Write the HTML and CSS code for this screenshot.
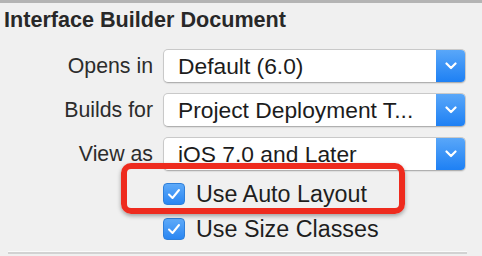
FILE: index.html
```html
<!DOCTYPE html>
<html>
<head>
<meta charset="utf-8">
<link rel="stylesheet" href="styles.css">
</head>
<body>
<div class="panel">
  <h1 class="title">Interface Builder Document</h1>
  <div class="form">
    <div class="label">Opens in</div>
    <div class="popup"><span class="value">Default (6.0)</span><span class="arrow"><svg width="12" height="8" viewBox="0 0 12 8"><path d="M1.5 1.5 L6 6 L10.5 1.5" fill="none" stroke="#fff" stroke-width="2.2" stroke-linecap="round" stroke-linejoin="round"/></svg></span></div>
    <div class="label">Builds for</div>
    <div class="popup"><span class="value">Project Deployment T...</span><span class="arrow"><svg width="12" height="8" viewBox="0 0 12 8"><path d="M1.5 1.5 L6 6 L10.5 1.5" fill="none" stroke="#fff" stroke-width="2.2" stroke-linecap="round" stroke-linejoin="round"/></svg></span></div>
    <div class="label">View as</div>
    <div class="popup"><span class="value">iOS 7.0 and Later</span><span class="arrow"><svg width="12" height="8" viewBox="0 0 12 8"><path d="M1.5 1.5 L6 6 L10.5 1.5" fill="none" stroke="#fff" stroke-width="2.2" stroke-linecap="round" stroke-linejoin="round"/></svg></span></div>
  </div>
  <div class="checks">
    <label class="check"><span class="box"><svg width="14" height="12" viewBox="0 0 14 12"><path d="M2 6.5 L5.5 10 L12 2" fill="none" stroke="#fff" stroke-width="2" stroke-linecap="round" stroke-linejoin="round"/></svg></span>Use Auto Layout</label>
    <label class="check"><span class="box"><svg width="14" height="12" viewBox="0 0 14 12"><path d="M2 6.5 L5.5 10 L12 2" fill="none" stroke="#fff" stroke-width="2" stroke-linecap="round" stroke-linejoin="round"/></svg></span>Use Size Classes</label>
    <div class="highlight"></div>
  </div>
  <div class="divider"></div>
</div>
</body>
</html>
```
FILE: styles.css
```css
html, body {
  margin: 0;
  padding: 0;
  background: #f0f0f0;
}
body {
  width: 482px;
  height: 256px;
  overflow: hidden;
  font-family: "Liberation Sans", Arial, sans-serif;
  color: #222;
}
.panel {
  border-top: 3px solid #b4b4b4;
  position: relative;
}
.title {
  margin: 5px 0 0 4px;
  font-size: 21.6px;
  line-height: 24px;
  font-weight: bold;
  color: #282828;
}
.form {
  margin-top: 17px;
  display: grid;
  grid-template-columns: 153px 303px;
  column-gap: 10px;
  row-gap: 10px;
}
.label {
  text-align: right;
  font-size: 21.3px;
  line-height: 34px;
  color: #2c2c2c;
}
.popup {
  height: 34px;
  box-sizing: border-box;
  display: flex;
  background: #fff;
  border: 1px solid #c9c9c9;
  border-bottom-color: #b0b0b0;
  border-radius: 5px;
  box-shadow: 0 1px 1px rgba(0,0,0,0.08);
  overflow: hidden;
}
.value {
  flex: 1;
  padding-left: 14px;
  font-size: 22.8px;
  line-height: 32px;
  color: #1c1c1c;
  white-space: nowrap;
  overflow: hidden;
}
.arrow {
  width: 30px;
  display: flex;
  align-items: center;
  justify-content: center;
  background: linear-gradient(#5ba8f9, #1c7ff4);
  margin: -1px -1px -1px 0;
}
.checks {
  position: relative;
  margin-top: 12px;
  padding-left: 163px;
  display: flex;
  flex-direction: column;
  gap: 13px;
}
.check {
  display: flex;
  align-items: center;
  gap: 11px;
  height: 22px;
  font-size: 23.3px;
  color: #1e1e1e;
}
.box {
  width: 22px;
  height: 22px;
  box-sizing: border-box;
  border-radius: 4px;
  background: linear-gradient(#5eaaf9, #2a86f2);
  border: 1px solid #2f7fd9;
  display: flex;
  align-items: center;
  justify-content: center;
}
.highlight {
  position: absolute;
  left: 121px;
  top: -20px;
  width: 284px;
  height: 51px;
  box-sizing: border-box;
  border: 6px solid #ee2b1e;
  border-radius: 10px;
  box-shadow: 0 2px 4px rgba(0,0,0,0.35);
}
.divider {
  margin: 11px 15px 0 8px;
  height: 2px;
  background: #d2d2d2;
  border-top: 1px solid #fafafa;
}
```
